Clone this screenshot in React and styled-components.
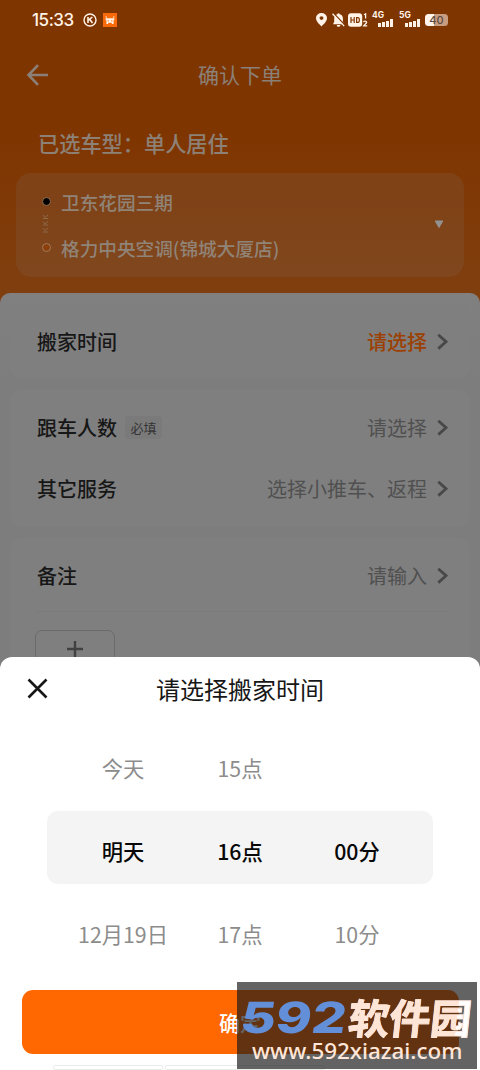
import React from "react";
import styled, { createGlobalStyle } from "styled-components";

const GlobalStyle = createGlobalStyle`
  * { box-sizing: border-box; }
  body {
    margin: 0;
    background: #fff;
    font-family: "Noto Sans CJK SC", "Noto Sans", sans-serif;
  }
`;

const Screen = styled.div`
  position: relative;
  width: 480px;
  height: 1070px;
  overflow: hidden;
  background: linear-gradient(#7f3500 0, #7f3500 130px, #803f10 300px);
`;

const StatusBar = styled.header`
  display: flex;
  align-items: center;
  height: 39px;
  padding: 0 31px 0 32px;
  color: #fff3e8;
`;

const Clock = styled.time`
  width: 51px;
  font: 500 17px/20px Inter, sans-serif;
  letter-spacing: -0.45px;
`;

const StatusIcon = styled.svg`
  flex: none;
  display: block;
  margin-left: ${(p) => p.$gap || 0}px;
`;

const Spacer = styled.div`
  flex: 1;
`;

const Signal = styled.div`
  display: flex;
  flex-direction: column;
  width: 22px;
  height: 15px;
  margin-left: ${(p) => p.$gap}px;
  font: 700 8.5px/7px Inter, sans-serif;
`;

const Bars = styled.div`
  display: flex;
  align-items: flex-end;
  justify-content: flex-end;
  gap: 1px;
  height: 8px;
  padding-right: 1px;
`;

const Bar = styled.i`
  width: 3px;
  height: ${(p) => p.$h}px;
  background: #fff3e8;
`;

const Battery = styled.div`
  width: 23px;
  height: 12px;
  margin: 0 1px 0 4px;
  border-radius: 3.5px;
  background: linear-gradient(90deg, #fff5ee 40%, #c79c80 40%);
  color: #5d4a40;
  font: 500 11px/12.5px Inter, sans-serif;
  text-align: center;
`;

const NavBar = styled.nav`
  display: grid;
  grid-template-columns: 60px 1fr 60px;
  align-items: center;
  height: 71px;
  padding: 0 26px;
  color: #8b8077;
`;

const NavTitle = styled.h1`
  margin: 0;
  padding-bottom: 1px;
  font-size: 21px;
  font-weight: 400;
  line-height: 30px;
  text-align: center;
`;

const VehicleType = styled.div`
  padding: 17px 38px 0;
  height: 63px;
  color: #8d8177;
  font-size: 21.2px;
  font-weight: 500;
  line-height: 32px;
`;

const RouteCard = styled.section`
  display: flex;
  align-items: center;
  height: 104px;
  margin: 0 16px;
  padding: 0 20px 2px 24px;
  border-radius: 15px;
  background: rgba(128, 128, 128, 0.14);
`;

const Stops = styled.div`
  flex: 1;
`;

const Stop = styled.div`
  display: flex;
  align-items: center;
  gap: 10px;
  height: 28px;
  color: #908377;
  font-size: 18.65px;
  font-weight: 500;
  white-space: nowrap;
`;

const StopDot = styled.i`
  width: 9px;
  height: 9px;
  margin-left: 2px;
  border: 1.3px solid ${(p) => (p.$start ? "#94704f" : "#a07b5e")};
  border-radius: 50%;
  background: ${(p) => (p.$start ? "#000" : "#8c3f0a")};
`;

const StopLink = styled.svg`
  display: block;
  margin: -1px 0 -1px 1px;
`;

const Panel = styled.main`
  display: flex;
  flex-direction: column;
  gap: 11px;
  height: 400px;
  margin-top: 16px;
  padding: 10px 10px 0;
  border-radius: 10px 10px 0 0;
  background: linear-gradient(#808080 0, #7d7d7d 90px);
`;

const FormCard = styled.section`
  flex: none;
  height: ${(p) => p.$h}px;
  padding: ${(p) => p.$top}px 22px 0 27px;
  border-radius: 12px;
  background: #7f7f7f;
`;

const Row = styled.div`
  display: flex;
  align-items: center;
  height: 61px;
  font-size: 20px;
`;

const Label = styled.span`
  color: #171717;
  font-weight: 500;
`;

const Tag = styled.span`
  width: 37px;
  margin-left: 8px;
  margin-bottom: 1px;
  border-radius: 4px;
  background: #7a7a7a;
  color: #343434;
  font-size: 13px;
  line-height: 23px;
  text-align: center;
`;

const Value = styled.span`
  margin-left: auto;
  margin-right: 10px;
  color: ${(p) => (p.$accent ? "#9c3f02" : "#505050")};
  font-weight: ${(p) => (p.$accent ? 500 : 400)};
`;

const Divider = styled.hr`
  margin: 5px 0 18px;
  border: 0;
  border-top: 1px solid #7b7b7b;
`;

const AddPhoto = styled.button`
  display: flex;
  justify-content: center;
  width: 80px;
  height: 80px;
  margin-left: -2px;
  padding: 10px 0 0;
  border: 1px solid #6b6b6b;
  border-radius: 7px;
  background: none;
`;

const Sheet = styled.section`
  position: absolute;
  left: 0;
  right: 0;
  bottom: 0;
  height: 413px;
  border-radius: 12px 12px 0 0;
  background: #fff;
`;

const SheetHeader = styled.div`
  display: grid;
  grid-template-columns: 60px 1fr 60px;
  align-items: center;
  height: 63px;
  padding: 0 27px;
`;

const SheetTitle = styled.h2`
  margin: 0;
  padding-top: 1px;
  color: #171717;
  font-size: 24px;
  font-weight: 400;
  line-height: 32px;
  text-align: center;
`;

const Picker = styled.div`
  height: 270px;
  padding: 8px 47px 0;
`;

const PickerRow = styled.div`
  display: grid;
  grid-template-columns: 152px 82px 152px;
  align-items: center;
  height: ${(p) => (p.$selected ? 73 : 83)}px;
  padding-top: ${(p) => p.$shift}px;
  padding-bottom: ${(p) => p.$lift || 0}px;
  border-radius: 11px;
  background: ${(p) => (p.$selected ? "#f4f4f4" : "transparent")};
  color: ${(p) => (p.$selected ? "#080808" : "#8c8c8c")};
  font-size: 21.3px;
  font-weight: ${(p) => (p.$selected ? 500 : 400)};
  line-height: 32px;
  text-align: center;
  white-space: nowrap;
`;

const Confirm = styled.button`
  display: block;
  width: 437px;
  height: 64px;
  margin: 0 auto;
  padding: 0;
  border: 0;
  border-radius: 11px;
  background: #ff6800;
  color: #fff;
  font: 500 21px/32px "Noto Sans CJK SC", sans-serif;
`;

const Peek = styled.div`
  display: flex;
  gap: 2px;
  margin: 11px 53px 0;
`;

const PeekCell = styled.div`
  width: ${(p) => p.$w}px;
  height: 5px;
  border: 1px solid #ececec;
  border-radius: 2px;
`;

const Watermark = styled.aside`
  position: absolute;
  left: 237px;
  top: 982px;
  width: 240px;
  height: 87px;
  padding-top: 12px;
  overflow: hidden;
  background: rgba(25, 25, 25, 0.68);
`;

const Brand = styled.div`
  display: flex;
  align-items: center;
  height: 44px;
  padding-left: 4px;
  white-space: nowrap;
`;

const BrandNumber = styled.span`
  flex: none;
  width: 108px;
  color: #638fd8;
  font: 800 43px/44px Inter, sans-serif;
  transform: translateY(1px) skewX(-8deg) scaleX(1.26);
  transform-origin: 0 50%;
`;

const BrandName = styled.span`
  background: linear-gradient(90deg, #ffe5d6 88%, #fff 88%);
  background-clip: text;
  color: transparent;
  font-size: 41px;
  font-weight: 700;
  line-height: 44px;
  -webkit-text-stroke: 0.8px #ffe8db;
  transform: skewX(-6deg);
`;

const Site = styled.div`
  margin-top: -1px;
  padding-left: 15px;
  color: #ffe6d8;
  font: 500 22.4px/28px "Noto Sans", sans-serif;
  white-space: nowrap;
`;

const Chevron = () => (
  <svg width="11" height="18" viewBox="0 0 11 18" fill="none" stroke="#484848" strokeWidth="2.8">
    <path d="M1.3 1.8L9 8.7L1.3 15.6" />
  </svg>
);

const SignalMeter = ({ name, gap }) => (
  <Signal $gap={gap}>
    {name}
    <Bars>
      {[4, 5, 6.5, 8].map((h) => <Bar key={h} $h={h} />)}
    </Bars>
  </Signal>
);

const times = [
  { cells: ["今天", "15点", ""], lift: 4, shift: 0 },
  { cells: ["明天", "16点", "00分"], shift: 7, selected: true },
  { cells: ["12月19日", "17点", "10分"], shift: 16 },
];

export default function App() {
  return (
    <>
      <GlobalStyle />
      <Screen>
        <StatusBar>
          <Clock>15:33</Clock>
          <StatusIcon width="14" height="14" viewBox="0 0 14 14" fill="none" stroke="currentColor" strokeWidth="1.4">
            <circle cx="7" cy="7" r="6" />
            <path d="M5 4V10M9.3 4L5.6 7.2M6.7 6.3L9.5 10" strokeWidth="1.6" />
          </StatusIcon>
          <StatusIcon $gap={6} width="14" height="14" viewBox="0 0 14 14">
            <path d="M0 0H14V14H0Z" fill="#f86a0a" />
            <path d="M3.2 3V5.4M10.8 3V5.4" fill="none" stroke="#ffd9bd" strokeWidth=".9" />
            <path d="M2.7 5.2H11.3V7.3H10.6V11H8.8V9.7H5.2V11H3.4V7.3H2.7Z" fill="#fff3e8" />
            <path d="M4.5 7.8H6M8 7.8H9.5" stroke="#f86a0a" strokeWidth=".8" />
          </StatusIcon>
          <Spacer />
          <StatusIcon width="11" height="14" viewBox="0 0 10 14" preserveAspectRatio="none">
            <path fill="currentColor" fillRule="evenodd" d="M5 0A5 5 0 0 0 0 5C0 8.5 3 11 5 13.5C7 11 10 8.5 10 5A5 5 0 0 0 5 0ZM5 3.3A1.8 1.8 0 1 1 5 6.9A1.8 1.8 0 0 1 5 3.3Z" />
          </StatusIcon>
          <StatusIcon $gap={5} width="13" height="14" viewBox="0 0 13 14">
            <path fill="currentColor" d="M1 11.2L2.2 8.7V5A4.3 4.3 0 0 1 5.4 1.2A1.2 1.2 0 0 1 7.7 1.2A4.3 4.3 0 0 1 10.9 5V8.7L12.1 11.2ZM4.7 12H8.4A1.8 1.8 0 0 1 4.7 12Z" />
            <path d="M1.6 .2L13 12.2" stroke="#7f3500" strokeWidth="1.3" />
            <path d="M.5 .8L12.2 13.1" stroke="currentColor" strokeWidth="1.3" />
          </StatusIcon>
          <StatusIcon $gap={3} width="20" height="14" viewBox="0 0 20 14">
            <rect y=".2" width="14.2" height="13.5" rx="3" fill="currentColor" />
            <path d="M3 4V10M6.2 4V10M3 7H6.2M8.6 4.6V9.4H9.6A1.6 1.6 0 0 0 11.3 7.8V6.2A1.6 1.6 0 0 0 9.6 4.6Z" fill="none" stroke="#7f3500" strokeWidth="1.2" />
            <path d="M16 1.8L17.6 .9V5.6M15.5 9.2C15.8 7.6 18.7 7.8 18.6 9.4C18.5 10.6 16.6 11.5 15.7 12.9H19.2" fill="none" stroke="currentColor" strokeWidth="1.3" />
          </StatusIcon>
          <SignalMeter name="4G" gap={4} />
          <SignalMeter name="5G" gap={5} />
          <Battery>40</Battery>
        </StatusBar>

        <NavBar>
          <svg width="23" height="22" viewBox="0 0 23 22" fill="none" stroke="currentColor" strokeWidth="2.6">
            <path d="M12 1.2L2.5 11L12 20.8M2.5 11H22" />
          </svg>
          <NavTitle>确认下单</NavTitle>
        </NavBar>

        <VehicleType>已选车型：单人居住</VehicleType>

        <RouteCard>
          <Stops>
            <Stop><StopDot $start />卫东花园三期</Stop>
            <StopLink width="8" height="20" viewBox="0 0 8 20" fill="none" stroke="#8c6748" strokeWidth="1">
              <path d="M2 1L4 3.5L7 1M2 4.5H7M2 7.5L4 10L7 7.5M2 11H7M2 14L4 16.5L7 14M2 18H7" />
            </StopLink>
            <Stop><StopDot />格力中央空调(锦城大厦店)</Stop>
          </Stops>
          <svg width="10" height="9" viewBox="0 0 10 9"><path d="M1.2 1H8.8L5 7.5Z" fill="#929292" stroke="#929292" strokeLinejoin="round" /></svg>
        </RouteCard>

        <Panel>
          <FormCard $h={75} $top={8}>
            <Row><Label>搬家时间</Label><Value $accent>请选择</Value><Chevron /></Row>
          </FormCard>
          <FormCard $h={138} $top={8}>
            <Row><Label>跟车人数</Label><Tag>必填</Tag><Value>请选择</Value><Chevron /></Row>
            <Row><Label>其它服务</Label><Value>选择小推车、返程</Value><Chevron /></Row>
          </FormCard>
          <FormCard $h={160} $top={7}>
            <Row><Label>备注</Label><Value>请输入</Value><Chevron /></Row>
            <Divider />
            <AddPhoto>
              <svg width="16" height="16" viewBox="0 0 16 16" stroke="#414141" strokeWidth="2.4"><path d="M8 0V16M0 8H16" /></svg>
            </AddPhoto>
          </FormCard>
        </Panel>

        <Sheet>
          <SheetHeader>
            <svg width="21" height="21" viewBox="0 0 21 21" stroke="#171717" strokeWidth="2.6"><path d="M1.5 1.5L19.5 19.5M19.5 1.5L1.5 19.5" /></svg>
            <SheetTitle>请选择搬家时间</SheetTitle>
          </SheetHeader>
          <Picker>
            {times.map(({ cells, selected, lift, shift }) => (
              <PickerRow key={cells[0]} $selected={selected} $lift={lift} $shift={shift}>
                {cells.map((text, i) => <span key={i}>{text}</span>)}
              </PickerRow>
            ))}
          </Picker>
          <Confirm>确定</Confirm>
          <Peek><PeekCell $w={110} /><PeekCell $w={160} /></Peek>
        </Sheet>

        <Watermark>
          <Brand>
            <BrandNumber>592</BrandNumber>
            <BrandName>软件园</BrandName>
          </Brand>
          <Site>www.592xiazai.com</Site>
        </Watermark>
      </Screen>
    </>
  );
}
